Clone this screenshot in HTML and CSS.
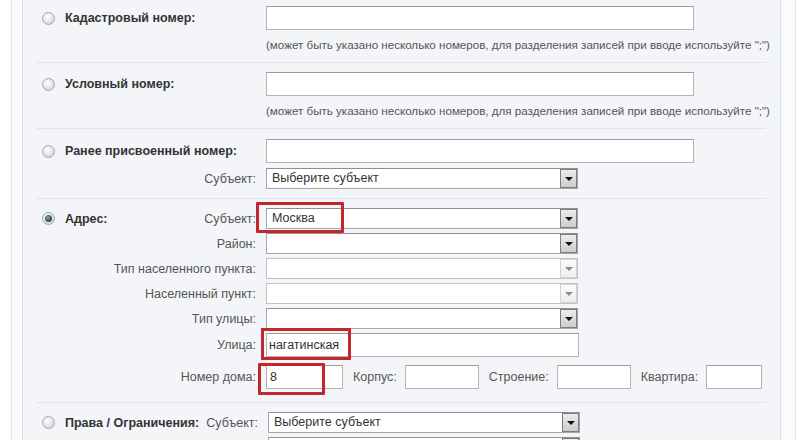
FILE: index.html
```html
<!DOCTYPE html>
<html lang="ru">
<head>
  <meta charset="UTF-8" />
  <title>Поиск объекта</title>
  <link rel="stylesheet" href="styles.css">
</head>
<body>
  <div class="frame">
    <div class="panel">

      <div class="sect first">
        <div class="row">
          <div class="lab"><span class="radio"></span><b>Кадастровый номер:</b></div>
          <div class="field"><div class="text wide"></div></div>
        </div>
        <div class="row">
          <div></div>
          <div class="hint">(может быть указано несколько номеров, для разделения записей при вводе используйте ";")</div>
        </div>
      </div>

      <div class="sect">
        <div class="row">
          <div class="lab"><span class="radio"></span><b>Условный номер:</b></div>
          <div class="field"><div class="text wide"></div></div>
        </div>
        <div class="row">
          <div></div>
          <div class="hint">(может быть указано несколько номеров, для разделения записей при вводе используйте ";")</div>
        </div>
      </div>

      <div class="sect prev">
        <div class="row">
          <div class="lab"><span class="radio"></span><b>Ранее присвоенный номер:</b></div>
          <div class="field"><div class="text wide"></div></div>
        </div>
        <div class="row gap5">
          <div class="lab"><span class="sub">Субъект:</span></div>
          <div class="field">
            <div class="select"><span class="val">Выберите субъект</span><span class="arrow"></span></div>
          </div>
        </div>
      </div>

      <div class="sect addr">
        <div class="row">
          <div class="lab"><span class="radio on"></span><b>Адрес:</b><span class="sub">Субъект:</span></div>
          <div class="field">
            <div class="select"><span class="val">Москва</span><span class="arrow"></span></div>
          </div>
        </div>
        <div class="row gap4">
          <div class="lab"><span class="sub">Район:</span></div>
          <div class="field"><div class="select"><span class="val"></span><span class="arrow"></span></div></div>
        </div>
        <div class="row gap4">
          <div class="lab"><span class="sub">Тип населенного пункта:</span></div>
          <div class="field"><div class="select off"><span class="val"></span><span class="arrow"></span></div></div>
        </div>
        <div class="row gap4">
          <div class="lab"><span class="sub">Населенный пункт:</span></div>
          <div class="field"><div class="select off"><span class="val"></span><span class="arrow"></span></div></div>
        </div>
        <div class="row gap4">
          <div class="lab"><span class="sub">Тип улицы:</span></div>
          <div class="field"><div class="select"><span class="val"></span><span class="arrow"></span></div></div>
        </div>
        <div class="row gap4">
          <div class="lab"><span class="sub">Улица:</span></div>
          <div class="field"><div class="text street">нагатинская</div></div>
        </div>
        <div class="row gap8">
          <div class="lab"><span class="sub">Номер дома:</span></div>
          <div class="field house">
            <div class="text num">8</div>
            <span class="inl">Корпус:</span>
            <div class="text small"></div>
            <span class="inl">Строение:</span>
            <div class="text small"></div>
            <span class="inl">Квартира:</span>
            <div class="text tiny"></div>
          </div>
        </div>

        <div class="mark m1"></div>
        <div class="mark m2"></div>
        <div class="mark m3"></div>
      </div>

      <div class="sect rights">
        <div class="row">
          <div class="lab"><span class="radio"></span><b>Права / Ограничения:</b><span class="sub">Субъект:</span></div>
          <div class="field">
            <div class="select"><span class="val">Выберите субъект</span><span class="arrow"></span></div>
          </div>
        </div>
        <div class="row gap4">
          <div></div>
          <div class="field"><div class="select"><span class="val"></span><span class="arrow"></span></div></div>
        </div>
      </div>

    </div>
  </div>
</body>
</html>
```

FILE: styles.css
```css
body {
  margin: 0;
  background: #fff;
  font-family: "Liberation Sans", Arial, sans-serif;
  font-size: 12.5px;
  color: #555;
  overflow: hidden;
}

.frame {
  margin-left: 11px;
  width: 783px;
  height: 440px;
  overflow: hidden;
  background: #fafbfc;
  border-left: 1px solid #e2e4e8;
  border-right: 1px solid #e2e4e8;
}

.panel {
  margin-left: 10px;
  width: 757px;
  height: 440px;
  background: #f4f5f8;
  border-left: 1px solid #dcdfe4;
  border-right: 1px solid #dcdfe4;
}

.sect {
  margin: 0 14px;
  padding: 9px 0;
  border-top: 1px solid #e1e3e8;
}

.sect.first {
  border-top: 0;
  padding-top: 6px;
}

.sect.prev {
  padding-top: 10px;
}

.sect.addr {
  position: relative;
  padding-bottom: 13px;
}

.row {
  display: grid;
  grid-template-columns: 229px 1fr;
  align-items: center;
}

.rights .row {
  grid-template-columns: 231px 1fr;
}

.gap4 { margin-top: 4px; }
.gap5 { margin-top: 5px; }
.gap8 { margin-top: 8px; }

.lab {
  display: flex;
  align-items: center;
  padding-left: 5px;
  padding-right: 10px;
  white-space: nowrap;
}

.lab b {
  color: #333;
  margin-left: 10px;
}

.sub {
  margin-left: auto;
}

.radio {
  width: 11px;
  height: 11px;
  border: 1px solid #a8a8a8;
  border-radius: 50%;
  background: radial-gradient(circle at 40% 35%, #fff 0%, #e6e6e6 50%, #c6c6c6 100%);
  flex: none;
  position: relative;
}

.radio.on::after {
  content: "";
  position: absolute;
  left: 2px;
  top: 2px;
  width: 7px;
  height: 7px;
  border-radius: 50%;
  background: radial-gradient(circle at 40% 35%, #7fa3b8 0%, #2c5468 60%, #173544 100%);
}

.field {
  display: flex;
  align-items: center;
  white-space: nowrap;
}

.text {
  box-sizing: border-box;
  height: 24px;
  line-height: 22px;
  background: #fff;
  border: 1px solid #b4b4b4;
  border-top-color: #9c9c9c;
  color: #333;
  padding: 0 3px;
  flex: none;
}

.text.wide { width: 428px; }
.text.street { width: 313px; padding-left: 2px; }
.text.num { width: 77px; }
.text.small { width: 74px; }
.text.tiny { width: 56px; }

.inl {
  margin: 0 8px 0 10px;
}

.hint {
  margin-top: 7px;
  line-height: 16px;
  font-size: 11.6px;
  color: #555;
  white-space: nowrap;
}

.select {
  box-sizing: border-box;
  width: 312px;
  height: 21px;
  display: flex;
  background: #fff;
  border: 1px solid #a6a6a6;
  border-top-color: #8f8f8f;
}

.select .val {
  flex: 1;
  line-height: 19px;
  padding-left: 5px;
  color: #333;
}

.select .arrow {
  box-sizing: border-box;
  width: 17px;
  height: 19px;
  border: 1px solid #7d7d7d;
  background: linear-gradient(#ececec, #cdcdcd);
  display: flex;
  align-items: center;
  justify-content: center;
}

.select .arrow::after {
  content: "";
  border-left: 4px solid transparent;
  border-right: 4px solid transparent;
  border-top: 4px solid #111;
}

.select.off {
  border-color: #c4c4c4;
}

.select.off .arrow {
  border-color: #d2d2d2;
  background: linear-gradient(#fbfbfb, #eeeeee);
}

.select.off .arrow::after {
  border-top-color: #8a8a8a;
}

.mark {
  position: absolute;
  box-sizing: border-box;
  border: 3px solid #c3262d;
  border-radius: 1px;
}

.m1 { left: 219px; top: 3px; width: 88px; height: 31px; }
.m2 { left: 224px; top: 129px; width: 90px; height: 32px; }
.m3 { left: 221px; top: 164px; width: 67px; height: 32px; }
```
